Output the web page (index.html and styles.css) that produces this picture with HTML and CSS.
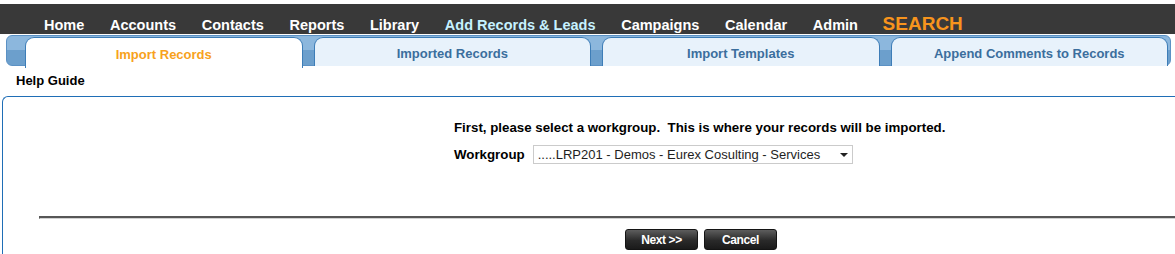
FILE: index.html
```html
<!DOCTYPE html>
<html lang="en">
<head>
  <meta charset="UTF-8">
  <link rel="stylesheet" href="styles.css">
  <title>Import Records</title>
</head>
<body class="page">
  <header class="topbar">
    <nav class="menu">
      <a class="menu__item" href="#">Home</a>
      <a class="menu__item" href="#">Accounts</a>
      <a class="menu__item" href="#">Contacts</a>
      <a class="menu__item" href="#">Reports</a>
      <a class="menu__item" href="#">Library</a>
      <a class="menu__item menu__item_current" href="#">Add Records &amp; Leads</a>
      <a class="menu__item" href="#">Campaigns</a>
      <a class="menu__item" href="#">Calendar</a>
      <a class="menu__item" href="#">Admin</a>
      <a class="menu__item menu__item_search" href="#">SEARCH</a>
    </nav>
  </header>

  <div class="tabs">
    <a class="tabs__tab tabs__tab_active" href="#">Import Records</a>
    <a class="tabs__tab" href="#">Imported Records</a>
    <a class="tabs__tab" href="#">Import Templates</a>
    <a class="tabs__tab" href="#">Append Comments to Records</a>
  </div>

  <div class="help">Help Guide</div>

  <section class="panel">
    <form class="import">
      <p class="import__intro">First, please select a workgroup.&nbsp; This is where your records will be imported.</p>
      <div class="import__row">
        <label class="import__label" for="workgroup">Workgroup</label>
        <div class="select">
          <select class="select__field" id="workgroup">
            <option>.....LRP201 - Demos - Eurex Cosulting - Services</option>
          </select>
          <span class="select__arrow"></span>
        </div>
      </div>
    </form>

    <hr class="divider">

    <div class="actions">
      <button class="button" type="button">Next &gt;&gt;</button>
      <button class="button" type="button">Cancel</button>
    </div>
  </section>
</body>
</html>
```

FILE: styles.css
```css
html, .page {
  margin: 0;
  font-family: 'Liberation Sans', Arial, sans-serif;
  background: #fff;
  color: #000;
  overflow: hidden;
}

* {
  box-sizing: border-box;
}

/* top menu */
.topbar {
  margin-top: 4px;
  height: 30px;
  background: #393939;
  padding: 11px 0 0 44px;
}

.menu {
  display: flex;
  align-items: baseline;
  gap: 25.7px;
}

.menu__item {
  color: #fff;
  font-size: 14.5px;
  font-weight: bold;
  line-height: 17px;
  text-decoration: none;
  white-space: nowrap;
}

.menu__item_current {
  color: #c6f1ff;
}

.menu__item_search {
  color: #f7941d;
  font-size: 19px;
  margin-left: -1px;
}

/* tab strip */
.tabs {
  display: flex;
  gap: 11px;
  height: 31px;
  margin: 1px 4px 0 6px;
  padding: 1px 2px 0 18px;
  border: 1px solid #5b91c4;
  border-radius: 6px;
  background: linear-gradient(#8cb7dd 50%, #6c9fcc 50%);
}

.tabs__tab {
  flex: 1;
  height: 29px;
  display: flex;
  align-items: center;
  justify-content: center;
  padding-top: 2px;
  border: 1px solid #3d7db7;
  border-bottom: 0;
  border-radius: 9px 9px 0 0;
  background: #e8f2fb;
  color: #3b6e9d;
  font-size: 13px;
  font-weight: bold;
  text-decoration: none;
}

.tabs__tab_active {
  height: 31px;
  background: #fff;
  color: #f7a21c;
  position: relative;
}

.help {
  height: 30px;
  padding: 7px 16px 0;
  font-size: 13px;
  font-weight: bold;
  line-height: 16px;
}

/* main panel */
.panel {
  height: 158px;
  margin-left: 2px;
  border-top: 1px solid #1f6eb6;
  border-left: 1px solid #1f6eb6;
  border-top-left-radius: 6px;
  padding-top: 23px;
}

.import {
  margin-left: 451px;
  font-size: 13.3px;
  line-height: 16px;
}

.import__intro {
  margin: 0;
  font-weight: bold;
  white-space: nowrap;
}

.import__row {
  display: flex;
  align-items: center;
  gap: 8px;
  margin-top: 9px;
}

.import__label {
  font-weight: bold;
}

.select {
  position: relative;
  width: 320px;
}

.select__field {
  appearance: none;
  width: 100%;
  height: 19px;
  padding: 0 0 0 4px;
  border: 1px solid #cbcbcb;
  border-radius: 0;
  background: #fff;
  font-family: 'Liberation Sans', Arial, sans-serif;
  font-size: 13px;
  color: #1e1e1e;
}

.select__arrow {
  position: absolute;
  right: 5px;
  top: 8px;
  border-left: 4px solid transparent;
  border-right: 4px solid transparent;
  border-top: 4px solid #222;
}

.divider {
  height: 0;
  margin: 52px 0 0 36px;
  border-style: solid;
  border-width: 2px 0 1px 1px;
  border-color: #575757 #575757 #d2d2d2 #575757;
}

.actions {
  display: flex;
  justify-content: center;
  gap: 6px;
  margin-top: 10px;
  padding-left: 224px;
}

.button {
  width: 73px;
  height: 21px;
  padding: 0;
  border: 1px solid #141414;
  border-radius: 3px;
  background: linear-gradient(#5d5d5d, #2a2a2a 55%, #1a1a1a);
  color: #fff;
  font-family: 'Liberation Sans', Arial, sans-serif;
  font-size: 12px;
  font-weight: bold;
  letter-spacing: -0.4px;
}
```
